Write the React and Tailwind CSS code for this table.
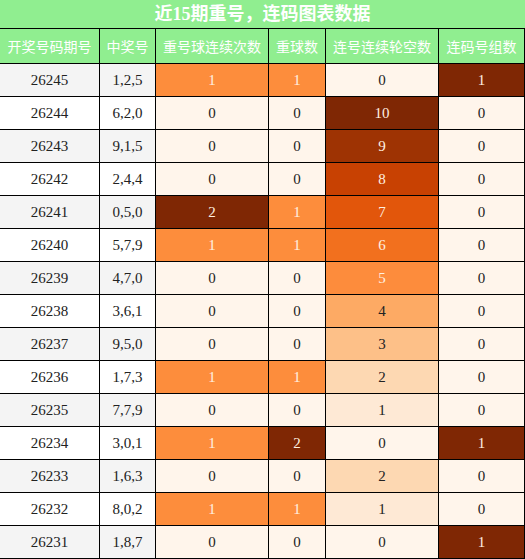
import React from "react";

const rows = [
  ["26245", "1,2,5", 1, 1, 0, 1],
  ["26244", "6,2,0", 0, 0, 10, 0],
  ["26243", "9,1,5", 0, 0, 9, 0],
  ["26242", "2,4,4", 0, 0, 8, 0],
  ["26241", "0,5,0", 2, 1, 7, 0],
  ["26240", "5,7,9", 1, 1, 6, 0],
  ["26239", "4,7,0", 0, 0, 5, 0],
  ["26238", "3,6,1", 0, 0, 4, 0],
  ["26237", "9,5,0", 0, 0, 3, 0],
  ["26236", "1,7,3", 1, 1, 2, 0],
  ["26235", "7,7,9", 0, 0, 1, 0],
  ["26234", "3,0,1", 1, 2, 0, 1],
  ["26233", "1,6,3", 0, 0, 2, 0],
  ["26232", "8,0,2", 1, 1, 1, 0],
  ["26231", "1,8,7", 0, 0, 0, 1],
];

const gap5 = {
  0: "bg-[#fff5eb] text-[#222]",
  1: "bg-[#fee9d5] text-[#222]",
  2: "bg-[#fdd8b2] text-[#222]",
  3: "bg-[#fdc088] text-[#222]",
  4: "bg-[#fdaa64] text-[#222]",
  5: "bg-[#fd8c3c] text-[#fff0e0]",
  6: "bg-[#f2701e] text-[#fff0e0]",
  7: "bg-[#e2560b] text-[#fff0e0]",
  8: "bg-[#c84102] text-[#fff0e0]",
  9: "bg-[#9e3303] text-[#fff0e0]",
  10: "bg-[#7f2704] text-[#fff0e0]",
};

const rep = {
  0: "bg-[#fff5eb] text-[#222]",
  1: "bg-[#fd8d3c] text-[#fff0e0]",
  2: "bg-[#7f2704] text-[#fff0e0]",
};

const grp = {
  0: "bg-[#fff5eb] text-[#222]",
  1: "bg-[#7f2704] text-[#fff0e0]",
};

const headers = ["开奖号码期号", "中奖号", "重号球连续次数", "重球数", "连号连续轮空数", "连码号组数"];

const cell = "flex items-center justify-center h-[32px] text-[15px]";

export default function App() {
  return (
    <div
      className="w-[525px] h-[559px] overflow-hidden bg-white"
      style={{ fontFamily: '"Liberation Serif", "Noto Sans CJK SC", serif' }}
    >
      <div className="h-[29px] bg-[#90ee90] border-b border-black flex items-center justify-center text-white font-bold text-[18px]">
        近15期重号，连码图表数据
      </div>
      <div className="grid grid-cols-[99px_55px_112px_56px_112px_85px] gap-px bg-black pr-px pb-px">
        {headers.map((h) => (
          <div
            key={h}
            className="h-[34px] bg-[#90ee90] text-white text-[14px] flex items-center justify-center"
            style={{ fontFamily: '"Noto Sans CJK SC", sans-serif' }}
          >
            {h}
          </div>
        ))}
        {rows.map((r, i) => {
          const zebra = i % 2 === 0 ? "bg-[#f4f4f4]" : "bg-white";
          return (
            <React.Fragment key={r[0]}>
              <div className={`${cell} ${zebra} text-[#222]`}>{r[0]}</div>
              <div className={`${cell} ${zebra} text-[#222]`}>{r[1]}</div>
              <div className={`${cell} ${rep[r[2]]}`}>{r[2]}</div>
              <div className={`${cell} ${rep[r[3]]}`}>{r[3]}</div>
              <div className={`${cell} ${gap5[r[4]]}`}>{r[4]}</div>
              <div className={`${cell} ${grp[r[5]]}`}>{r[5]}</div>
            </React.Fragment>
          );
        })}
      </div>
    </div>
  );
}
